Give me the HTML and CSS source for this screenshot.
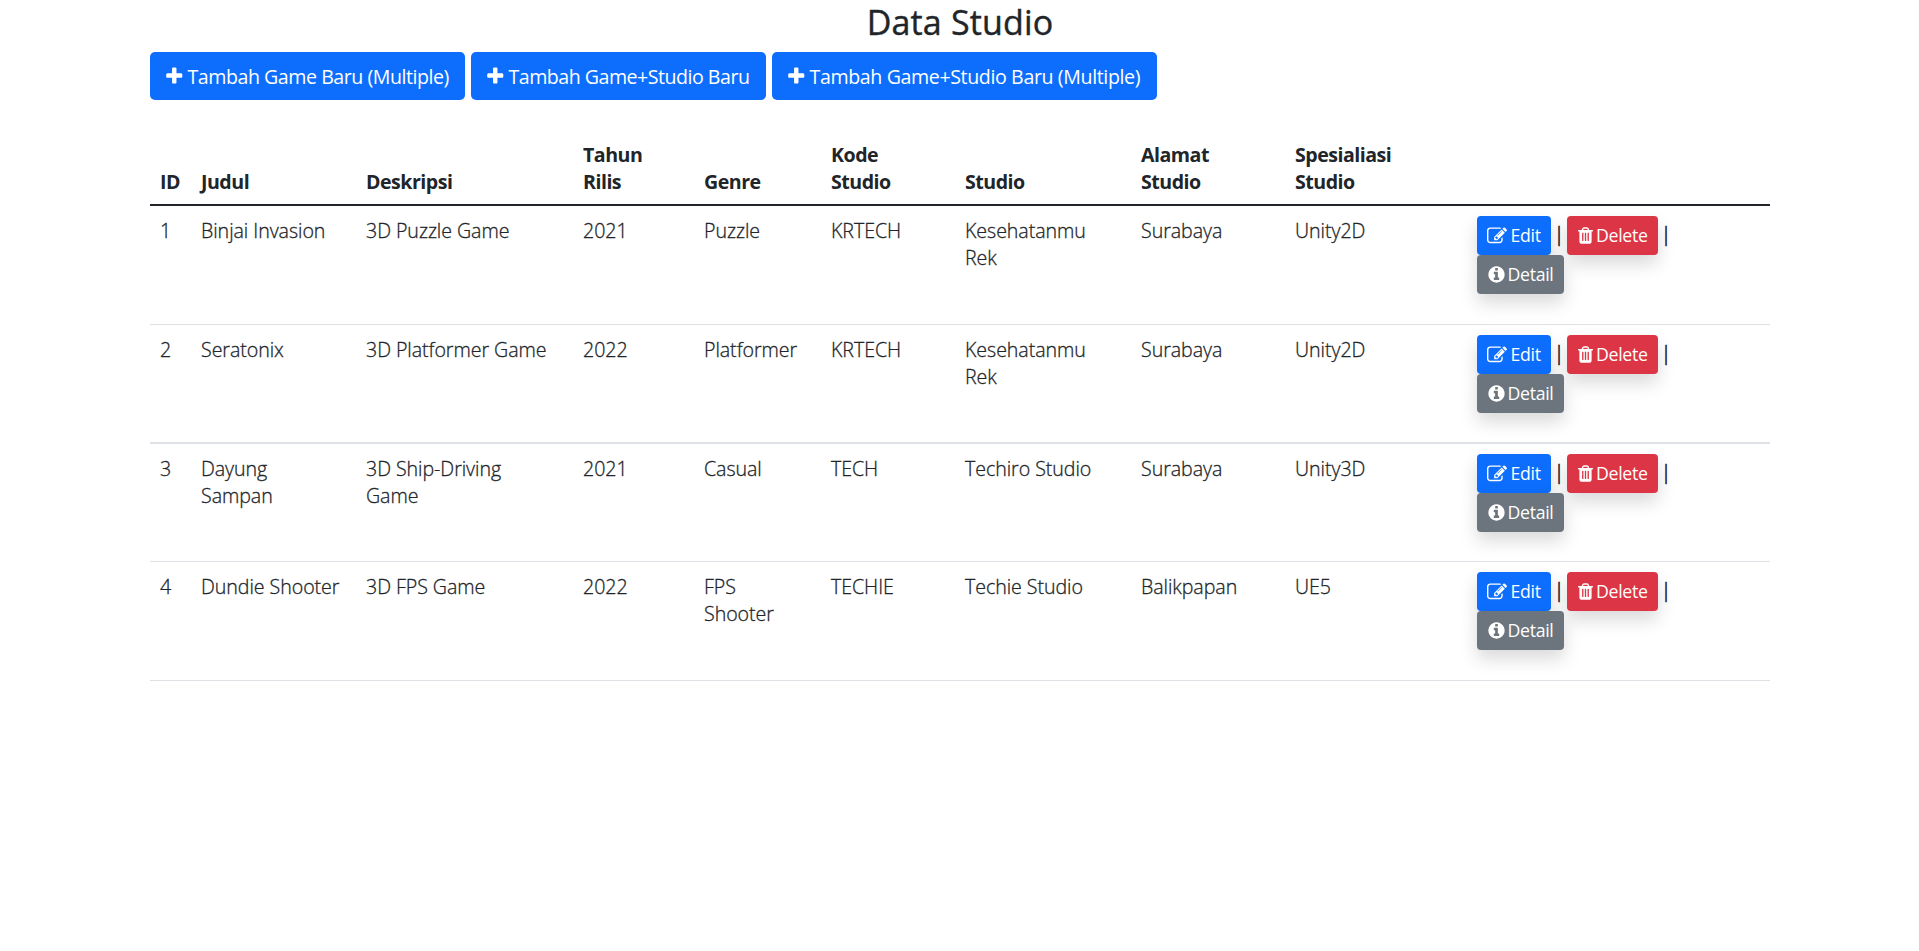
FILE: index.html
```html
<!DOCTYPE html>
<html lang="id">
<head>
<meta charset="utf-8">
<title>Data Studio</title>
<link rel="stylesheet" href="styles.css">
</head>
<body>
<svg class="sprite" aria-hidden="true">
  <symbol id="plus" viewBox="0 0 1792 1792"><path d="M1600 736v192q0 40-28 68t-68 28h-416v416q0 40-28 68t-68 28h-192q-40 0-68-28t-28-68v-416h-416q-40 0-68-28t-28-68v-192q0-40 28-68t68-28h416v-416q0-40 28-68t68-28h192q40 0 68 28t28 68v416h416q40 0 68 28t28 68z"/></symbol>
  <symbol id="edit" viewBox="0 0 1792 1792"><path d="M888 1184l116-116-152-152-116 116v56h96v96h56zm440-720q-16-16-33 1l-350 350q-17 17-1 33t33-1l350-350q17-17 1-33zm80 594v190q0 119-84.500 203.500t-203.500 84.500h-832q-119 0-203.500-84.500t-84.500-203.500v-832q0-119 84.500-203.500t203.500-84.500h832q63 0 117 25 15 7 18 23 3 17-9 29l-49 49q-14 14-32 8-23-6-45-6h-832q-66 0-113 47t-47 113v832q0 66 47 113t113 47h832q66 0 113-47t47-113v-126q0-13 9-22l64-64q15-15 35-7t20 29zm-96-738l288 288-672 672h-288v-288zm444 132l-92 92-288-288 92-92q28-28 68-28t68 28l152 152q28 28 28 68t-28 68z"/></symbol>
  <symbol id="trash" viewBox="0 0 1792 1792"><path d="M704 1376v-704q0-14-9-23t-23-9h-64q-14 0-23 9t-9 23v704q0 14 9 23t23 9h64q14 0 23-9t9-23zm256 0v-704q0-14-9-23t-23-9h-64q-14 0-23 9t-9 23v704q0 14 9 23t23 9h64q14 0 23-9t9-23zm256 0v-704q0-14-9-23t-23-9h-64q-14 0-23 9t-9 23v704q0 14 9 23t23 9h64q14 0 23-9t9-23zm-544-992h448l-48-117q-7-9-17-11h-317q-10 2-17 11zm928 32v64q0 14-9 23t-23 9h-96v948q0 83-47 143.500t-113 60.500h-832q-66 0-113-58.500t-47-141.500v-952h-96q-14 0-23-9t-9-23v-64q0-14 9-23t23-9h309l70-167q15-37 54-63t79-26h320q40 0 79 26t54 63l70 167h309q14 0 23 9t9 23z"/></symbol>
  <symbol id="info" viewBox="0 0 1792 1792"><path d="M1152 1376v-160q0-14-9-23t-23-9h-96v-512q0-14-9-23t-23-9h-320q-14 0-23 9t-9 23v160q0 14 9 23t23 9h96v320h-96q-14 0-23 9t-9 23v160q0 14 9 23t23 9h448q14 0 23-9t9-23zm-128-896v-160q0-14-9-23t-23-9h-192q-14 0-23 9t-9 23v160q0 14 9 23t23 9h192q14 0 23-9t9-23zm640 416q0 209-103 385.500t-279.500 279.500-385.500 103-385.500-103-279.500-279.500-103-385.500 103-385.500 279.500-279.500 385.500-103 385.500 103 279.500 279.500 103 385.500z"/></symbol>
</svg>
<main class="container">
  <h2 class="title">Data Studio</h2>
  <div class="toolbar">
    <a class="btn btn-lg btn-game"><svg class="icon"><use href="#plus"/></svg>Tambah Game Baru (Multiple)</a>
    <a class="btn btn-lg btn-studio"><svg class="icon"><use href="#plus"/></svg>Tambah Game+Studio Baru</a>
    <a class="btn btn-lg btn-multi"><svg class="icon"><use href="#plus"/></svg>Tambah Game+Studio Baru (Multiple)</a>
  </div>
  <table class="table">
    <colgroup><col class="c-id"><col class="c-judul"><col class="c-desk"><col class="c-tahun"><col class="c-genre"><col class="c-kode"><col class="c-studio"><col class="c-alamat"><col class="c-spes"><col></colgroup>
    <thead>
      <tr><th>ID</th><th>Judul</th><th>Deskripsi</th><th>Tahun<br>Rilis</th><th>Genre</th><th>Kode<br>Studio</th><th>Studio</th><th>Alamat<br>Studio</th><th>Spesialiasi<br>Studio</th><th></th></tr>
    </thead>
    <tbody>
      <tr><td>1</td><td>Binjai Invasion</td><td>3D Puzzle Game</td><td>2021</td><td>Puzzle</td><td>KRTECH</td><td>Kesehatanmu<br>Rek</td><td>Surabaya</td><td>Unity2D</td>
        <td class="actions-cell"><div class="actions"><a class="btn btn-sm edit"><svg class="icon"><use href="#edit"/></svg>Edit</a><span class="sep">|</span><a class="btn btn-sm delete"><svg class="icon"><use href="#trash"/></svg>Delete</a><span class="sep">|</span><a class="btn btn-sm detail"><svg class="icon"><use href="#info"/></svg>Detail</a></div></td></tr>
      <tr class="thick"><td>2</td><td>Seratonix</td><td>3D Platformer Game</td><td>2022</td><td>Platformer</td><td>KRTECH</td><td>Kesehatanmu<br>Rek</td><td>Surabaya</td><td>Unity2D</td>
        <td class="actions-cell"><div class="actions"><a class="btn btn-sm edit"><svg class="icon"><use href="#edit"/></svg>Edit</a><span class="sep">|</span><a class="btn btn-sm delete"><svg class="icon"><use href="#trash"/></svg>Delete</a><span class="sep">|</span><a class="btn btn-sm detail"><svg class="icon"><use href="#info"/></svg>Detail</a></div></td></tr>
      <tr class="short"><td>3</td><td>Dayung<br>Sampan</td><td>3D Ship-Driving<br>Game</td><td>2021</td><td>Casual</td><td>TECH</td><td>Techiro Studio</td><td>Surabaya</td><td>Unity3D</td>
        <td class="actions-cell"><div class="actions"><a class="btn btn-sm edit"><svg class="icon"><use href="#edit"/></svg>Edit</a><span class="sep">|</span><a class="btn btn-sm delete"><svg class="icon"><use href="#trash"/></svg>Delete</a><span class="sep">|</span><a class="btn btn-sm detail"><svg class="icon"><use href="#info"/></svg>Detail</a></div></td></tr>
      <tr><td>4</td><td>Dundie Shooter</td><td>3D FPS Game</td><td>2022</td><td>FPS<br>Shooter</td><td>TECHIE</td><td>Techie Studio</td><td>Balikpapan</td><td>UE5</td>
        <td class="actions-cell"><div class="actions"><a class="btn btn-sm edit"><svg class="icon"><use href="#edit"/></svg>Edit</a><span class="sep">|</span><a class="btn btn-sm delete"><svg class="icon"><use href="#trash"/></svg>Delete</a><span class="sep">|</span><a class="btn btn-sm detail"><svg class="icon"><use href="#info"/></svg>Detail</a></div></td></tr>
    </tbody>
  </table>
</main>
</body>
</html>
```

FILE: styles.css
```css
* { box-sizing: border-box; }
body {
  margin: 0;
  background: #fff;
  color: #212529;
  font: 300 19.6px/27px "Open Sans", "Noto Sans", sans-serif;
}
.sprite { display: none; }
.container { width: 1620px; margin: 0 auto 0 150px; }
.title {
  margin: 0;
  height: 52px;
  padding-top: 1px;
  font-size: 34px;
  font-weight: 400;
  line-height: 43px;
  letter-spacing: .15px;
  text-align: center;
  -webkit-text-stroke: .4px currentColor;
}
.toolbar { display: flex; gap: 6px; height: 79px; align-items: flex-start; }
.btn {
  display: flex;
  align-items: center;
  color: #fff;
  background: #0d6efd;
  white-space: nowrap;
  font-weight: 400;
}
.icon { flex: none; fill: currentColor; }
.btn-lg { height: 48px; padding-left: 14px; border-radius: 5px; letter-spacing: -.46px; }
.btn-lg .icon { width: 20.5px; height: 20.5px; margin-right: 3px; }
.btn-game { width: 315px; }
.btn-studio { width: 295px; letter-spacing: -.5px; }
.btn-multi { width: 385px; letter-spacing: -.38px; }

.table { width: 1620px; table-layout: fixed; border-spacing: 0; }
.c-id { width: 41px; }
.c-judul { width: 165px; }
.c-desk { width: 217px; }
.c-tahun { width: 121px; }
.c-genre { width: 127px; }
.c-kode { width: 134px; }
.c-studio { width: 176px; }
.c-alamat { width: 154px; }
.c-spes { width: 182px; }
th {
  height: 75px;
  padding: 0 0 9px 10px;
  vertical-align: bottom;
  text-align: left;
  font-weight: 700;
  letter-spacing: -.5px;
  border-bottom: 2px solid #212529;
}
td {
  height: 119px;
  padding: 11px 0 0 10px;
  vertical-align: top;
  letter-spacing: -.05px;
  border-bottom: 1px solid #dee2e6;
  -webkit-text-stroke: .3px currentColor;
}
.thick td { border-bottom-width: 2px; }
.short td { height: 118px; }
.actions-cell { padding-top: 10px; -webkit-text-stroke: 0; }
.actions { display: flex; flex-wrap: wrap; width: 220px; }
.sep { width: 16px; padding-top: 4px; text-align: center; -webkit-text-stroke: .6px currentColor; }
.btn-sm {
  height: 39px;
  padding-left: 10px;
  border-radius: 4px;
  font-size: 17.7px;
  letter-spacing: -.3px;
  box-shadow: 0 9px 18px rgba(0, 0, 0, .15);
}
.btn-sm .icon { width: 19px; height: 19px; }
.edit .icon { width: 20px; height: 20px; margin-right: 3.5px; }
.edit { width: 74px; }
.delete { width: 91px; padding-left: 9px; background: #dc3545; }
.delete .icon { margin-right: 1px; }
.detail { width: 87px; background: #6c757d; }
.detail .icon { margin-right: 1.5px; }
```
